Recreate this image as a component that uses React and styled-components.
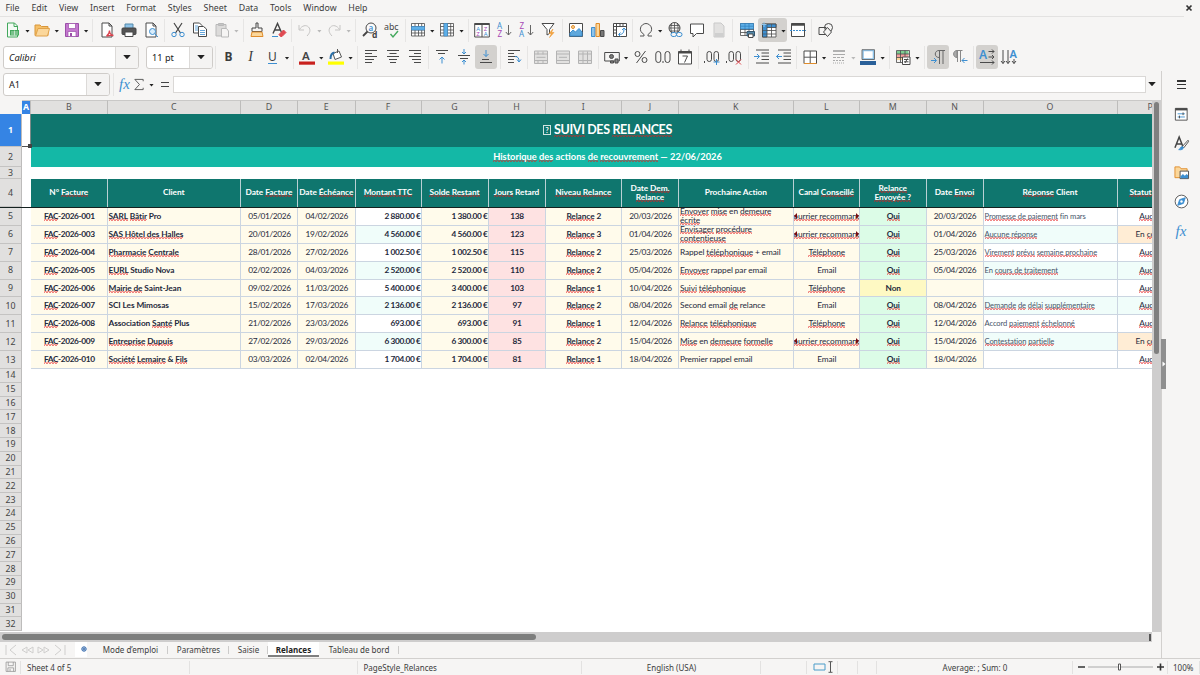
import React from 'react'
import styled, { createGlobalStyle, css } from 'styled-components'

const blue = '#3d8fd1'
const dark = '#4a4a4a'

// ---------- icons, all on a 16x16 grid ----------

const page = <path d="M3 1h7l3 3v11H3z M10 1v3h3" fill="#fff" />
const arrowDown = <path d="M12.5 3v10M9.8 10l2.7 3 2.7-3" stroke="#666" />
const gridLines = <path d="M1.5 1.5h13v12.5h-13z M1.5 4.5h13M1.5 8h13M1.5 11h13M5 1.5v12.5M8.5 1.5v12.5M11.7 1.5v12.500" strokeWidth=".8" />
const mergeIcon = (extra) => (
  <g stroke="#b3b3b3">
    <path d="M1.5 2h13v12.5h-13z" fill="#e2e1e0" />
    <path d={extra} />
  </g>
)

const icons = {
  new: <><path d="M2.5 1h7l3 3v11h-10z" fill="#f4fbf5" stroke="#43a85c" /><path d="M9 1v3.500h3.500" stroke="#43a85c" /><path d="M5 8h9v5.500H5z" fill="#43a85c" stroke="none" /><path d="M6 10h7M6 12h7M9.500 8.500v5" stroke="#dff2e3" strokeWidth=".7" /></>,
  open: <><path d="M1 13.500V3h5l1.500 1.500H14V13.500z" fill="#f5c069" stroke="#d9963a" /><path d="M1.500 14L4 6.500h11.500L13.500 14z" fill="#fbd79b" stroke="#e0a24a" /></>,
  save: <><path d="M1.500 1.500h13v13h-13z" fill="#c478cf" stroke="#9b4fa8" /><path d="M4.500 1.500h7v5h-7z M4 9.500h8v5H4z" fill="#fff" stroke="#9b4fa8" strokeWidth=".7" /><path d="M6 11h2v3H6z" fill="#9b4fa8" stroke="none" /></>,
  pdf: <>{page}<path d="M7.500 14c3-2 3-3.500 3-5.500 0 3 1.500 4.500 4 5-2.500-.5-5 0-7 .5z" stroke="#d9434e" strokeWidth="1.300" /></>,
  print: <><path d="M4 6V2h8v4" fill="#8fc4ea" stroke="#5589aa" /><rect x="1" y="6" width="14" height="6.500" rx="1" fill="#555" stroke="#444" /><path d="M4 10h8v4.500H4z" fill="#fff" /></>,
  preview: <>{page}<circle cx="9.500" cy="9.500" r="3" fill="#d9edfb" stroke={blue} /><path d="M12 12l3 3" stroke={blue} /></>,
  cut: <><path d="M4 1l6.500 10M12 1L5.500 11" stroke="#444" strokeWidth="1.200" /><circle cx="4" cy="12.500" r="2.200" stroke={blue} /><circle cx="12" cy="12.500" r="2.200" stroke={blue} /></>,
  copy: <><path d="M1.500 1h6l2.500 2.500V11H1.500z" fill="#fff" /><path d="M6.500 4.500h5l3 2.500v7.500h-8z" fill="#fff" /><path d="M8 8.500h5M8 10.500h5M8 12.500h5M3 4h3M3 6h3M3 8h3" stroke={blue} strokeWidth=".8" /></>,
  paste: <g stroke="#b9b9b9"><path d="M2 2.500h10V14H2z" fill="#dcdbda" /><path d="M4.500 1.500h5v2h-5z" fill="#c4c4c4" /><path d="M7.500 6.500h5L14.500 9v6h-7z" fill="#f6f5f4" /></g>,
  brush: <><path d="M7 1h2v5h4v3.500H3V6h4z" fill="#f6f5f4" stroke="#444" /><path d="M3 10h10l1 4.500H2z" fill="#fbd79b" stroke="#e08d2c" /></>,
  clear: <><path d="M2 11.500L6.500 1.500 11 11.500M4 8h5" stroke="#444" strokeWidth="1.400" /><path d="M1 14.500h6" stroke={blue} /><path d="M8 12.500l4.500-4.500 2.500 2.500-4 4H9.500z" fill="#e04a52" stroke="#e04a52" /></>,
  undo: <path d="M2 3v5h5M2.500 7.500C5 3.500 9 2.500 11.500 5s1.500 6-1.500 9" stroke="#c6c5c4" />,
  redo: <path d="M14 3v5H9M13.500 7.500C11 3.500 7 2.500 4.500 5S3 11 6 14" stroke="#c6c5c4" />,
  find: <><circle cx="9" cy="6" r="5" fill="#fbfbfb" /><path d="M5.500 9.500L1 14" stroke="#444" strokeWidth="1.800" /><text x="6.500" y="8.500" fontSize="8" fontWeight="600" fill={blue} stroke="none">a</text><text x="10" y="15.500" fontSize="8.500" fontWeight="700" fill="#444" stroke="none">d</text></>,
  spell: <><text x="0" y="7.500" fontSize="8.800" fill="#444" stroke="none">abc</text><path d="M6.500 12l2.500 3 5-6" stroke="#43a85c" strokeWidth="1.400" /></>,
  row: <><path d="M1.500 1.500h13v12.500h-13z" fill="#fff" stroke="none" />{gridLines}<path d="M1.500 4.500h13v3.500h-13z" fill="#5fb0e8" stroke="#3d8fd1" strokeWidth=".6" /></>,
  column: <><path d="M1.500 1.500h13v12.500h-13z" fill="#fff" stroke="none" />{gridLines}<path d="M5 1.500h3.500v12.500H5z" fill="#5fb0e8" stroke="#3d8fd1" strokeWidth=".6" /></>,
  sort: <><path d="M.7 1.500h14.600v13.500H.7z M8 1.500v13.500" fill="#fff" /><path d="M.7 2h14.600" strokeWidth="2" /><text x="2.200" y="8.500" fontSize="6" fill={blue} stroke="none">A</text><text x="2.200" y="14.300" fontSize="6" fill="#a649b5" stroke="none">Z</text><text x="9.700" y="8.500" fontSize="6" fill="#a649b5" stroke="none">Z</text><text x="9.700" y="14.300" fontSize="6" fill={blue} stroke="none">A</text></>,
  az: <><text x="1" y="7" fontSize="8" fill={blue} stroke="none">A</text><text x="1.500" y="15" fontSize="8" fill="#a649b5" stroke="none">Z</text>{arrowDown}</>,
  za: <><text x="1.500" y="7" fontSize="8" fill="#a649b5" stroke="none">Z</text><text x="1" y="15" fontSize="8" fill={blue} stroke="none">A</text>{arrowDown}</>,
  filter: <><path d="M2 1.500h12L9.500 7.500v4L7 13V7.500z" fill="#fff" /><path d="M13 7l-4 4.500h2.500L9.500 15.500l4.500-5h-2.500z" fill="#f4a742" stroke="#ea8f22" strokeWidth=".5" /></>,
  image: <><path d="M1.500 1.500h13v13h-13z" fill="#fff" /><circle cx="5" cy="5" r="1.500" fill="#fbd79b" stroke="#e08d2c" /><path d="M2 14v-3l3-3 2.500 2L11 6.500 14 10v4z" fill="#5fa8dc" stroke={blue} /></>,
  chart: <><path d="M1.500 5.500h3.500v9H1.500z" fill="#8fc4ea" stroke={blue} /><path d="M6 1.500h3.500v13H6z" fill="#fbd79b" stroke="#e08d2c" /><path d="M10.500 8.500h3.500v6h-3.500z" fill="#777" /></>,
  pivot: <><path d="M1.500 1.500h13v13h-13z M1.500 4.500h13 M4.500 1.500v13 M8 1.500v3M11 1.500v3M1.500 8h3M1.500 11h3" fill="#fff" /><path d="M7 12.500c4 0 5-2 5-6M10 8l2-2 2 2M8.500 10.500l-2 2 2 2" stroke={blue} /></>,
  omega: <path d="M2 14h4v-1.500C3 10.500 2 8.500 2.500 6 3 3.500 5.500 1.500 8 1.500S13 3.500 13.500 6c.5 2.500-.5 4.500-3.500 6.500V14h4" stroke="#555" />,
  link: <><circle cx="7.500" cy="6" r="5.500" /><path d="M2 6h11M3 3.500h9M3 9h9M7.500.5v11M5 1.500c-1.500 3-1.500 6 0 9M10 1.500c1.500 3 1.500 6 0 9" strokeWidth=".8" /><rect x="4" y="10.500" width="5.500" height="4" rx="2" fill="#f6f5f4" stroke={blue} /><rect x="9.500" y="10.500" width="5.500" height="4" rx="2" fill="#f6f5f4" stroke={blue} /></>,
  comment: <path d="M1.500 2h13v9.500H7.500L4 15v-3.500H1.500z" fill="#fff" />,
  header: <><path d="M3 1h7l3 3v11H3z" fill="#e2e1e0" stroke="#c9c9c9" /><path d="M4 11h8.500v4H4z" fill="#cfcfcf" stroke="none" /></>,
  printarea: <><path d="M1.500 1.500h13v12h-13z M1.500 7.500h13M1.500 10.500h13M6 1.500v12M10 1.500v12" fill="#fff" strokeWidth=".8" /><path d="M1.500 1.500h13v5.500h-13z M1.500 4.200h13M6 1.500v5.500M10 1.500v5.500" fill="#5fb0e8" stroke="#2f7fbf" strokeWidth=".7" /><path d="M8 9.500h7.500v4.500H8z" fill="#5589aa" stroke="#33556e" /><path d="M9.500 12h4.500v3.500H9.500z" fill="#fff" /></>,
  freeze: <><path d="M1.500 2h13.500v13h-13.500zM1.500 8.500h13.500M1.500 12h13.500M10.500 2v13" fill="#fff" strokeWidth=".8" /><path d="M1.500 2h13.500v3.500H6V15H1.500z" fill="#3d8fd1" stroke="#444" strokeWidth=".8" /><path d="M1.500 8.500H6M1.500 12H6M10.500 2v3.500M6 2v3.500" strokeWidth=".6" /><path d="M3 0v5M.5 2.500h5" stroke="#8fc4ea" /></>,
  split: <><path d="M1.500 1.500h13v13h-13z" fill="#fff" /><path d="M1.500 2.500h13" strokeWidth="2.500" /><path d="M0 8.500h16" stroke={blue} strokeDasharray="2 1" /></>,
  shapes: <><path d="M1 5.500h7v7H1z" /><circle cx="10.500" cy="5.500" r="4" /><path d="M9.500 5.500l4 4.500-4 4.500-4-4.500z" fill="#f6f5f4" /></>,
  fontcolor: <><text x="3" y="10.500" fontSize="11.500" fontWeight="600" fill="#444" stroke="none">A</text><path d="M0 12.500h16v3.200H0z" fill="#c9211e" stroke="none" /></>,
  fill: <><path d="M5 4.500L11 2l2.500 6-6.500 2.500z" fill="#fff" stroke="#555" /><path d="M2.500 10c0-4 1-6 4-6.500" stroke="#2a6fa8" strokeWidth="2" /><path d="M9.500 0v4" stroke="#555" /><path d="M0 12.500h16v3.200H0z" fill="#ffff00" stroke="none" /></>,
  left: <path d="M2 1.500h12M2 4.500h7M2 7.500h12M2 10.500h9M2 13.500h7" />,
  center: <path d="M2 1.500h12M4.500 4.500h7M2 7.500h12M4 10.500h8M5 13.500h6" />,
  right: <path d="M2 1.500h12M7 4.500h7M2 7.500h12M5 10.500h9M7 13.500h7" />,
  top: <><path d="M2 1.500h12M4 4.500h7" /><path d="M8 14.500V8M5.500 10.500L8 8l2.500 2.500" stroke={blue} /></>,
  middle: <><path d="M2 6.500h12M4 9.500h8" /><path d="M8 0v5M6 3l2 2 2-2M8 15.500V11M6 13l2-2 2 2" stroke={blue} /></>,
  bottom: <><path d="M4 10.500h7M2 13.500h12" /><path d="M8 1v6.500M5.500 5L8 7.500 10.500 5" stroke={blue} /></>,
  wrap: <><path d="M2 1.500h12M2 4.500h6M2 7.500h9M2 10.500h6M2 13.500h6" /><path d="M9 7.500c3 0 4 1.500 4 5M11 10.500l2 2.500 2-2.500" stroke={blue} /></>,
  merge1: mergeIcon('M1.500 5h13M1.500 11.500h13M5 2.500v3M10 2.500v3M5 11.500v3M10 11.500v3M3.500 8.300h9'),
  merge2: mergeIcon('M1.500 5h13M1.500 11.500h13M4 8.300h8'),
  merge3: mergeIcon('M1.500 5h13M1.500 11.500h13M6 2.500v12M10.500 2.500v12'),
  currency: <><path d="M.7 3.500h14.600v8.500H.7z" /><circle cx="7.500" cy="7.500" r="2" fill="#777" /><path d="M6.500 12h3v2h-3zM11 10h3v4h-3z" fill="#888" /></>,
  percent: <><circle cx="4.500" cy="5" r="2.500" /><circle cx="11.500" cy="11" r="2.500" /><path d="M12.500 2L3.500 14" /></>,
  number: <><rect x=".8" y="2.500" width="5" height="11" rx="2.500" /><path d="M8 12v2" /><rect x="10" y="2.500" width="5" height="11" rx="2.500" /></>,
  date: <><path d="M1.500 2.500h13v12.500h-13z" fill="#fff" /><path d="M1.500 3.500h13" strokeWidth="2" /><path d="M4 .5v3M12 .5v3" /><path d="M5.500 7h5L7.500 13.500" /></>,
  adddec: <><path d="M.5 12v2" /><rect x="3" y="2.500" width="4.500" height="10" rx="2.200" /><rect x="10" y="2.500" width="4.500" height="10" rx="2.200" /><path d="M12.500 10v6M9.500 13h6" stroke={blue} /></>,
  deldec: <><path d="M.5 12v2" /><rect x="3" y="2.500" width="4.500" height="10" rx="2.200" /><rect x="10" y="2.500" width="4.500" height="10" rx="2.200" /><path d="M10 10.500l5 5M15 10.500l-5 5" stroke="#e0434b" /></>,
  indent: <><path d="M2 1h13M7.500 4h7.500M7.500 7.200h7.500M7.500 10.500h7.500M2 14h13" /><path d="M0 7.500h5M3 5l2.500 2.500L3 10" stroke={blue} /></>,
  outdent: <><path d="M2 1h13M7.500 4h7.500M7.500 7.200h7.500M7.500 10.500h7.500M2 14h13" /><path d="M6 7.500H.5M3 5L.5 7.500 3 10" stroke={blue} /></>,
  borders: <><path d="M2 2h12.500v12.500H2z" fill="#fff" /><path d="M8.200 2v12.500M2 8.200h12.500" stroke="#555" /><path d="M2 14.500h12.500" stroke="#e08d2c" /></>,
  bstyle: <g stroke="#aaa"><path d="M2 2h12" strokeWidth="1.800" /><path d="M2 5.500h12" /><path d="M2 8.500h12" strokeDasharray="3 1" /><path d="M2 11.500h12" strokeDasharray="2 1" /><path d="M2 14h12" strokeDasharray="1 1" /></g>,
  bcolor: <><path d="M3 1.500h10.500v8.500H3z" fill="#fff" stroke="#8fc4ea" strokeWidth="1.600" /><path d="M2 .7h12.500v9.800H2z" stroke="#555" strokeWidth=".8" /><path d="M0 12h16v4H0z" fill="#2a6099" stroke="none" /></>,
  cond: <><path d="M1.500 2h12v3h-12z" fill="#7fce93" stroke="none" /><path d="M1.500 5h12v3h-12z" fill="#f3a0a0" stroke="none" /><path d="M1.500 8h12v3h-12z" fill="#fbd79b" stroke="none" /><path d="M1.500 1.500h13v12h-13zM1.500 5h13M1.500 8.500h13M5.500 1.500v12M10 1.500v6" strokeWidth=".8" /><path d="M7.500 8h7.500v7.500H7.500z" fill="#fff" /><path d="M9 10.500h4.500M9 12.800h4.500M12.500 9.500l-2.500 4.500" /></>,
  ltr: <><path d="M9.500 15V2M13 15V2M15 1.500H9C4 1.500 4 8.500 9 8.500" stroke="#666" /><path d="M1 11.500h5M4 9L6.500 11.500 4 14" stroke={blue} /></>,
  rtl: <><path d="M5 1.500C.5 1.500.5 8.500 5 8.500z" fill="#aaa" stroke="#888" /><path d="M5.500 13V1.500M8.500 13V1.500M10.500 1.500H5" stroke="#888" /><path d="M15.500 11.500H10M12.500 9L10 11.500l2.500 2.500" stroke={blue} /></>,
  horiz: <><text x="0" y="10" fontSize="12" fontWeight="600" fill={blue} stroke="none">A</text><path d="M9.500 2.500h5.500M9.500 8h5.500M1 13.500h14M13 .5l2 2-2 2M13 6l2 2-2 2M13 11.500l2 2-2 2" /></>,
  vert: <><text x="8.500" y="9" fontSize="11" fontWeight="600" fill={blue} stroke="none">A</text><path d="M2 1v13.500M7 1v13.500M13 10v4.500M0 12l2 2.500 2-2.500M5 12l2 2.500 2-2.500M11 12l2 2.500 2-2.500" /></>,
  props: <><path d="M1.500 1.500h13v13h-13z" fill="#fff" /><path d="M1.500 2.500h13" strokeWidth="2.500" /><path d="M4 7.500h8M4 11h8" stroke={blue} /><path d="M10 6v3M6 9.500v3" stroke="#444" /></>,
  styles: <><path d="M1 12.500L5.500 1 10 12.500M2.500 8.500h6" stroke="#444" strokeWidth="1.600" /><path d="M15 4.500L9 11l1.500 1.500L15.500 6z" fill="#fff" /><path d="M5 14.500c2.500.5 5 0 5-2.500-2-1.500-3 0-3.500 1.500z" fill={blue} stroke={blue} /></>,
  gallery: <><path d="M1 13.500V2h5l1.500 2H14v9.500z" fill="#fbd79b" stroke="#e08d2c" /><path d="M6.500 6.500h9v8h-9z" fill="#fff" /><path d="M7 14v-2l2.500-2.500 2 2 2-2 1.500 1.500v3z" fill={blue} stroke="none" /></>,
  navigator: <><circle cx="8" cy="8" r="6.800" fill="#fff" stroke="#555" /><path d="M12 4l-2 6-6 2 2-6z" fill={blue} stroke={blue} /><circle cx="8" cy="8" r="1.300" fill="#fff" stroke="none" /></>,
  floppy: <g stroke="#8d8d8d"><path d="M1.500 1.500h13v13h-13z M4.500 1.500v5h7v-5 M4 14.500v-5h8v5M7 11v3" /></g>,
}

const Svg = styled.svg`
  display: block;
  flex: none;
  width: ${(p) => p.$size || 16}px;
  height: ${(p) => p.$size || 16}px;
  fill: none;
  stroke: ${dark};
  stroke-width: 1;
  font-family: 'Noto Sans', sans-serif;
  overflow: visible;
`

const Icon = ({ name, size }) => (
  <Svg viewBox="0 0 16 16" $size={size}>{icons[name]}</Svg>
)

// ---------- toolbars ----------

// numbers are separators (their width), strings are buttons: "v" dropdown, "!" pressed, "-" greyed arrow
const standardBar = [
  'new v', 'open v', 'save v', 6, 'pdf', 'print', 'preview', 5, 'cut', 'copy', 'paste v-', 5.7,
  'brush', 'clear', 4, 'undo v-', 'redo v-', 6.8, 'find', 'spell', 3.5, 'row v', 'column v', 6,
  'sort', 'az', 'za', 'filter', 5.3, 'image', 'chart', 'pivot', 4, 'omega v', 'link', 'comment',
  'header', 6, 'printarea', 'freeze v!', 'split', 5.4, 'shapes',
]

const formatBar = [
  4.5, 'B', 'I', 'U v', 5, 'fontcolor v', 'fill v', 6, 'left', 'center', 'right', 5, 'top', 'middle', 'bottom !',
  5.7, 'wrap', 5, 'merge1', 'merge2', 'merge3', 4.5, 'currency v', 'percent', 'number', 'date', 5.5,
  'adddec', 'deldec', 5.7, 'indent', 'outdent', 3.5, 'borders v', 'bstyle v-', 'bcolor v', 5.5, 'cond v', 5.7,
  'ltr !', 'rtl', 5.5, 'horiz !', 'vert',
]

const Tools = ({ items }) => items.map((item, i) => {
  if (typeof item === 'number') return <Separator key={i} $w={item} />
  const [name, flags = ''] = item.split(' ')
  return (
    <Tool key={i} $active={flags.includes('!')}>
      <ToolFace>{'BIU'.includes(name) ? <Letter $kind={name}>{name}</Letter> : <Icon name={name} />}</ToolFace>
      {flags.includes('v') && <Caret $muted={flags.includes('-')} />}
    </Tool>
  )
})

// ---------- sheet data, ~words~ are flagged by the spell checker ----------

const columns = 'ABCDEFGHIJKLMNOP'.split('')

const headers = [
  'N° ~Facture~', 'Client', 'Date ~Facture~', 'Date ~Échéance~', '~Montant TTC~', '~Solde Restant~', '~Jours~ Retard',
  '~Niveau Relance~', 'Date ~Dem.~ ~Relance~', 'Prochaine Action', 'Canal ~Conseillé~', '~Relance~ ~Envoyée\u00a0?~',
  'Date ~Envoi~', '~Réponse~ Client', '~Statut~ Final',
]

const courrier = '~Courrier recommandé~'
const tel = '~Téléphone~'

const rows = [
  ['001', '~SARL~ ~Bâtir~ Pro', '05/01/2026', '04/02/2026', '2 880.00 €', '1 380.00 €', '138', '2', '20/03/2026', '~Envoyer~ ~mise~ en ~demeure~ ~écrite~', courrier, '~Oui~', '20/03/2026', '~Promesse de paiement~ fin mars', '~Aucun~'],
  ['003', '~SAS Hôtel des Halles~', '20/01/2026', '19/02/2026', '4 560.00 €', '4 560.00 €', '123', '3', '01/04/2026', '~Envisager~ ~procédure~ ~contentieuse~', courrier, '~Oui~', '01/04/2026', '~Aucune réponse~', 'En ~cours~'],
  ['004', '~Pharmacie~ ~Centrale~', '28/01/2026', '27/02/2026', '1 002.50 €', '1 002.50 €', '115', '2', '25/03/2026', 'Rappel ~téléphonique~ + email', tel, '~Oui~', '25/03/2026', '~Virement~ ~prévu~ ~semaine prochaine~', '~Aucun~'],
  ['005', '~EURL~ Studio Nova', '02/02/2026', '04/03/2026', '2 520.00 €', '2 520.00 €', '110', '2', '05/04/2026', '~Envoyer~ rappel par email', 'Email', '~Oui~', '05/04/2026', 'En ~cours de traitement~', '~Aucun~'],
  ['006', '~Mairie de~ Saint-Jean', '09/02/2026', '11/03/2026', '5 400.00 €', '3 400.00 €', '103', '1', '10/04/2026', '~Suivi~ ~téléphonique~', tel, 'Non', '', '', '~Aucun~'],
  ['007', 'SCI Les Mimosas', '15/02/2026', '17/03/2026', '2 136.00 €', '2 136.00 €', '97', '2', '08/04/2026', 'Second email ~de~ relance', 'Email', '~Oui~', '08/04/2026', '~Demande~ ~de~ ~délai~ ~supplémentaire~', '~Aucun~'],
  ['008', 'Association ~Santé~ Plus', '21/02/2026', '23/03/2026', '693.00 €', '693.00 €', '91', '1', '12/04/2026', '~Relance~ ~téléphonique~', tel, '~Oui~', '12/04/2026', 'Accord ~paiement~ ~échelonné~', '~Aucun~'],
  ['009', '~Entreprise~ ~Dupuis~', '27/02/2026', '29/03/2026', '6 300.00 €', '6 300.00 €', '85', '2', '15/04/2026', '~Mise~ en ~demeure~ ~formelle~', courrier, '~Oui~', '15/04/2026', '~Contestation~ ~partielle~', 'En ~cours~'],
  ['010', '~Société~ ~Lemaire~ & ~Fils~', '03/03/2026', '02/04/2026', '1 704.00 €', '1 704.00 €', '81', '1', '18/04/2026', 'Premier rappel email', 'Email', '~Oui~', '18/04/2026', '', '~Aucun~'],
]

const cream = '#fffbeb'
const boldCols = [0, 1, 4, 5, 6, 7, 11]
const numberCols = [0, 2, 3, 4, 5, 6, 8, 12]
const aligns = { 1: 'flex-start', 4: 'flex-end', 5: 'flex-end', 9: 'flex-start', 13: 'flex-start' }

const background = (col, row, text) => {
  const stripe = row % 2 ? '#f0fdfa' : '#fff'
  if (col === 6) return '#fee2e2'
  if (col === 11) return text === 'Non' ? '#fef9c3' : '#dcfce7'
  if (col === 14) return text.startsWith('En') ? '#ffedd5' : stripe
  if (col === 4 || col === 13) return stripe
  return cream
}

const Words = ({ text }) => text.split('~').map((part, i) => (
  i % 2 ? <Typo key={i}>{part}</Typo> : part
))

const Sheet = () => (
  <Grid>
    <Row $h={14}>
      <Corner />
      {columns.map((c) => <ColHead key={c} $active={c === 'A'}>{c}</ColHead>)}
    </Row>
    <Row $h={33}>
      <RowHead $active>1</RowHead>
      <Cursor><i /></Cursor>
      <Banner $bg="#0f766e" $big><Tofu>?</Tofu><span><Words text="~SUIVI~ DES ~RELANCES~" /></span></Banner>
    </Row>
    <Row $h={20}>
      <RowHead>2</RowHead>
      <Blank />
      <Banner $bg="#14b8a6"><span><Words text="~Historique~ ~des~ actions ~de~ ~recouvrement~ — 22/06/2026" /></span></Banner>
    </Row>
    <Row $h={12}><RowHead>3</RowHead></Row>
    <Row $h={29} $frozen>
      <RowHead>4</RowHead>
      <Blank />
      {headers.map((h) => <HeadCell key={h}><span><Words text={h} /></span></HeadCell>)}
    </Row>
    {rows.map((row, r) => (
      <Row key={row[0]} $h={17.9}>
        <RowHead>{r + 5}</RowHead>
        <Blank />
        {row.map((value, c) => {
          const text = c === 0 ? `~FAC~-2026-${value}` : c === 7 ? `~Relance~ ${value}` : value
          return (
            <Cell
              key={c}
              $bg={background(c, r, text)}
              $bold={boldCols.includes(c)}
              $number={numberCols.includes(c)}
              $align={aligns[c]}
              $wrap={c === 9 && r < 2}
              $note={c === 13}
            >
              <span><Words text={text} /></span>
              {text === courrier && <Overflow />}
            </Cell>
          )
        })}
      </Row>
    ))}
    {Array.from({ length: 19 }, (_, i) => (
      <Row key={i} $h={13.8}><RowHead>{i + 14}</RowHead></Row>
    ))}
  </Grid>
)

const App = () => (
  <Window>
    <Global />
    <MenuBar>
      {['File', 'Edit', 'View', 'Insert', 'Format', 'Styles', 'Sheet', 'Data', 'Tools', 'Window', 'Help'].map((m) => <span key={m}>{m}</span>)}
      <Close viewBox="0 0 8 8"><path d="M1.500 1.500l5 5M6.500 1.500l-5 5" /></Close>
    </MenuBar>
    <Toolbar><Tools items={standardBar} /></Toolbar>
    <Toolbar>
      <Combo $w={136} $italic><span>Calibri</span><b><Caret $large /></b></Combo>
      <Gap $w={7} />
      <Combo $w={67}><span>11 pt</span><b><Caret $large /></b></Combo>
      <Tools items={formatBar} />
    </Toolbar>
    <Body>
      <Main>
        <FormulaBar>
          <Combo $w={107}><span>A1</span><b><Caret $large /></b></Combo>
          <Separator $w={6} />
          <Fx>fx</Fx>
          <Sigma viewBox="0 0 12 14"><path d="M10.500 3.500V1.500H1.500L6.500 7l-5 5.500h9V10.500" /></Sigma>
          <Caret />
          <Equals />
          <Input />
          <Caret $large />
        </FormulaBar>
        <SheetArea>
          <Viewport><Sheet /></Viewport>
          <VScroll><i /></VScroll>
        </SheetArea>
        <HScroll><i /><b /></HScroll>
        <Tabs>
          <TabNav viewBox="0 0 62 12">
            <path d="M1 1v10M11 1L5 6l6 5M22 3l-5 3 5 3zM28 3l-5 3 5 3zM33 3l5 3-5 3zM39 3l5 3-5 3zM50 1l6 5-6 5M60 1v10" />
          </TabNav>
          <AddTab><svg viewBox="0 0 6 6"><circle cx="3" cy="3" r="2.200" /><path d="M3 1.500v3M1.500 3h3" /></svg></AddTab>
          <Tab $w={75}>Mode d’emploi</Tab>
          <Tab $w={61}>Paramètres</Tab>
          <Tab $w={39}>Saisie</Tab>
          <Tab $w={51} $active>Relances</Tab>
          <Tab $w={80}>Tableau de bord</Tab>
        </Tabs>
      </Main>
      <Sidebar>
        <Handle viewBox="0 0 5 50"><path d="M0 0h5v50H0z" fill="#8f8f8f" /><path d="M1.500 22.500v5l3-2.500z" fill="#fff" /></Handle>
        <Burger><i /><i /><i /></Burger>
        <Icon name="props" size={14.5} />
        <Icon name="styles" size={15} />
        <Icon name="gallery" size={15} />
        <Icon name="navigator" size={15} />
        <Fx>fx</Fx>
      </Sidebar>
    </Body>
    <Status>
      <Field $w={21}><Icon name="floppy" size={11.5} /></Field>
      <Field $w={169} $left={6}>Sheet 4 of 5</Field>
      <Field $w={168} />
      <Field $w={224} $left={5.5}>PageStyle_Relances</Field>
      <Field $w={179}>English (USA)</Field>
      <Field $w={46} />
      <Field $w={31}>
        <Selection viewBox="0 0 20 12"><path d="M1 3h11v6H1z" stroke="#4a9cc9" /><path d="M17.500 1v10M15.500.7h4M15.500 11.300h4" stroke="#555" /></Selection>
      </Field>
      <Field $w={20} />
      <Field $w={19} />
      <Field $w={196}>Average: ; Sum: 0</Field>
      <Field $w={95}>
        <Zoom viewBox="0 0 86 10"><path d="M0 5h7M79 5h7M82.500 1.500v7" stroke="#333" strokeWidth="1.600" /><path d="M10 5h65" stroke="#aaa" /><path d="M40.500 2h2v6h-2z" fill="#fff" stroke="#555" /></Zoom>
      </Field>
      <Field $w={32} $left={5}>100%</Field>
    </Status>
  </Window>
)

const Global = createGlobalStyle`
  * {
    box-sizing: border-box;
  }
  body {
    margin: 0;
    overflow: hidden;
  }
`

const Window = styled.div`
  width: 1200px;
  height: 675px;
  display: flex;
  flex-direction: column;
  background: #f6f5f4;
  color: #3c3c3c;
  font: 8.8px 'Noto Sans', sans-serif;
  overflow: hidden;
`

const MenuBar = styled.div`
  height: 17px;
  flex: none;
  display: flex;
  align-items: center;
  gap: 11.8px;
  margin-right: 16px;
  padding-left: 5.5px;
  border-bottom: 1px solid #e3e2e1;
`

const Close = styled.svg`
  width: 8px;
  height: 8px;
  margin-left: auto;
  margin-right: -9px;
  overflow: visible;
  stroke: #333;
  stroke-width: 1.7;
`

const Toolbar = styled.div`
  height: 27px;
  flex: none;
  display: flex;
  align-items: center;
  padding: 0 0 1px 2px;
`

const Tool = styled.div`
  height: 24px;
  flex: none;
  display: flex;
  align-items: center;
  border-radius: 3px;
  background: ${(p) => (p.$active ? '#d3d1ce' : 'transparent')};
`

const ToolFace = styled.div`
  width: 22px;
  display: flex;
  justify-content: center;
`

const Letter = styled.span`
  font-size: 12px;
  line-height: 16px;
  ${(p) => p.$kind === 'B' && 'font-weight: 700;'}
  ${(p) => p.$kind === 'I' && "font-family: 'Liberation Serif', serif; font-style: italic; font-size: 14px;"}
  ${(p) => p.$kind === 'U' && css`
    line-height: 12px;
    border-bottom: 1px solid ${blue};
  `}
`

const Caret = styled.i`
  flex: none;
  width: ${(p) => (p.$large ? 8 : 5)}px;
  height: ${(p) => (p.$large ? 4.5 : 3)}px;
  margin: ${(p) => (p.$large ? 0 : '2px 1.3px 0 1px')};
  background: ${(p) => (p.$muted ? '#b9b9b9' : '#222')};
  clip-path: polygon(0 0, 100% 0, 50% 100%);
`

const Separator = styled.i`
  flex: none;
  width: ${(p) => p.$w}px;
  height: 23px;
  background: linear-gradient(#e6e5e4, #e6e5e4) center / 1px 100% no-repeat;
`

const Gap = styled.i`
  width: ${(p) => p.$w}px;
`

const Combo = styled.div`
  width: ${(p) => p.$w}px;
  height: 23px;
  flex: none;
  display: flex;
  margin-left: ${(p) => (p.$italic ? 1 : 0)}px;
  border: 1px solid #cfccc9;
  border-radius: 3px;
  background: #fff;
  overflow: hidden;
  span {
    flex: 1;
    padding-left: 5px;
    font-size: 9.2px;
    line-height: 21px;
    font-style: ${(p) => (p.$italic ? 'italic' : 'normal')};
    color: #222;
  }
  b {
    width: 23px;
    display: flex;
    align-items: center;
    justify-content: center;
    background: #f4f3f2;
    border-left: 1px solid #dcdad8;
  }
`

const Body = styled.div`
  height: 587px;
  flex: none;
  display: flex;
`

const Main = styled.div`
  width: 1161px;
  display: flex;
  flex-direction: column;
`

const FormulaBar = styled.div`
  height: 29px;
  flex: none;
  display: flex;
  align-items: center;
  padding: 0 5px 3px 3px;
`

const Fx = styled.span`
  flex: none;
  width: 17px;
  text-align: center;
  font: italic 15px/16px 'Liberation Serif', serif;
  color: ${blue};
`

const Sigma = styled.svg`
  width: 12px;
  height: 13px;
  fill: none;
  stroke: #555;
  margin-right: 3px;
`

const Equals = styled.i`
  width: 8px;
  height: 5px;
  margin: 0 4px 0 6px;
  border: solid #444;
  border-width: 1.5px 0;
`

const Input = styled.div`
  flex: 1;
  height: 17px;
  margin-right: 2px;
  background: #fff;
  border: 1px solid #dad8d6;
`

const SheetArea = styled.div`
  height: 532px;
  flex: none;
  display: flex;
  background: #fff;
`

const Viewport = styled.div`
  width: 1152px;
  overflow: hidden;
`

const Grid = styled.div`
  width: 1184px;
  display: flex;
  flex-direction: column;
`

const Row = styled.div`
  height: ${(p) => p.$h}px;
  flex: none;
  display: grid;
  grid-template-columns: 22px 9px 76.5px 133.5px 57px 57.5px 66px 67px 57px 76.5px 57px 114.5px 66.5px 66.5px 57px 134px 66.5px;
  grid-template-rows: 100%;
  ${(p) => p.$frozen && css`
    border-bottom: 1px solid #14211f;
  `}
`

const Corner = styled.div`
  background: #f6f5f4;
`

const ColHead = styled.div`
  display: flex;
  align-items: center;
  justify-content: center;
  line-height: 10px;
  padding-bottom: 1px;
  border-right: 1px solid #bdbcbb;
  border-top: 1px solid #c9c8c7;
  background: ${(p) => (p.$active ? '#3584e4' : '#e1e0df')};
  color: ${(p) => (p.$active ? '#fff' : '#555')};
  font-weight: ${(p) => (p.$active ? 700 : 400)};
`

const RowHead = styled.div`
  display: flex;
  align-items: center;
  justify-content: center;
  line-height: 10px;
  border-right: 1px solid #bdbcbb;
  border-bottom: 1px solid #c4c3c2;
  background: ${(p) => (p.$active ? '#3584e4' : '#e1e0df')};
  color: ${(p) => (p.$active ? '#fff' : '#444')};
  font-weight: ${(p) => (p.$active ? 700 : 400)};
`

const Blank = styled.div``

// outline of the selected cell with its fill handle
const Cursor = styled.div`
  position: relative;
  border-right: 1px solid #7d8a88;
  border-bottom: 1px solid #555;
  i {
    position: absolute;
    right: -2px;
    bottom: -2px;
    width: 4px;
    height: 4px;
    background: #444;
    z-index: 1;
  }
`

const Banner = styled.div`
  grid-column: 3 / -1;
  display: flex;
  align-items: center;
  justify-content: center;
  background: ${(p) => p.$bg};
  color: #fff;
  font: 700 ${(p) => (p.$big ? '12.5px' : '9.3px')} Lato, sans-serif;
  letter-spacing: ${(p) => (p.$big ? '-0.35px' : '0')};
  padding-bottom: ${(p) => (p.$big ? 2 : 1)}px;
`

const Tofu = styled.i`
  width: 8px;
  height: 10px;
  margin-right: 3px;
  border: 1px solid #cfe5e2;
  font: 700 7px/8px Lato, sans-serif;
  text-align: center;
  letter-spacing: 0;
`

// spell checker's zigzag, running along the base line
const Typo = styled.span`
  background: url("data:image/svg+xml,%3Csvg xmlns='http://www.w3.org/2000/svg' width='3' height='2'%3E%3Cpath d='M-.5 2L1.500 .2 3.500 2' fill='none' stroke='%23e3191c' stroke-width='.9'/%3E%3C/svg%3E") 0 100% / 3px 2px repeat-x;
`

const HeadCell = styled.div`
  display: flex;
  align-items: center;
  justify-content: center;
  text-align: center;
  background: #0f766e;
  border-right: 1px solid #b9d0d4;
  padding-bottom: 1px;
  color: #fff;
  font: 700 8.3px/9px Lato, sans-serif;
  letter-spacing: -0.05px;
`

const Cell = styled.div`
  position: relative;
  display: flex;
  align-items: center;
  justify-content: ${(p) => p.$align || 'center'};
  padding: 0 0 0 1px;
  overflow: hidden;
  white-space: ${(p) => (p.$wrap ? 'normal' : 'nowrap')};
  background: ${(p) => p.$bg};
  border-right: 1px solid #cbd5e1;
  border-bottom: 1px solid #cbd5e1;
  color: ${(p) => (p.$note ? '#475569' : '#1e293b')};
  font: ${(p) => (p.$bold ? 700 : 400)} ${(p) => (p.$note ? 7.6 : 8.3)}px/9px Lato, sans-serif;
  letter-spacing: ${(p) => (p.$number ? -0.37 : -0.1)}px;
  span {
    flex: none;
    max-width: ${(p) => (p.$wrap ? '100%' : 'none')};
  }
`

// red arrows of a text that does not fit its cell
const Overflow = styled.i`
  position: absolute;
  inset: 5px 0 auto 0;
  height: 6px;
  &::before,
  &::after {
    content: '';
    position: absolute;
    border: 3px solid transparent;
  }
  &::before {
    left: 0;
    border-left: 0;
    border-right: 3px solid #7a0c10;
  }
  &::after {
    right: 0;
    border-right: 0;
    border-left: 3px solid #7a0c10;
  }
`

const VScroll = styled.div`
  width: 9px;
  background: #cecdcd;
  i {
    display: block;
    width: 5px;
    height: 252px;
    margin: 2px auto 0;
    border-radius: 3px;
    background: #7f7f7f;
  }
`

const HScroll = styled.div`
  height: 10px;
  flex: none;
  width: 1152px;
  display: flex;
  align-items: center;
  justify-content: space-between;
  padding: 0 1px 0 2px;
  background: #cecdcd;
  i {
    width: 534px;
    height: 6px;
    border-radius: 3px;
    background: #7d7e7d;
  }
  b {
    width: 2px;
    height: 7px;
    background: #555;
  }
`

const Tabs = styled.div`
  flex: 1;
  display: flex;
  padding-left: 5px;
  font-size: 8px;
`

const TabNav = styled.svg`
  width: 62px;
  height: 12px;
  margin-top: 2px;
  fill: none;
  stroke: #cfcecd;
`

const AddTab = styled.div`
  width: 19px;
  margin-left: 7px;
  svg {
    display: block;
    width: 12px;
    height: 15px;
    padding: 4px 0 5px 6px;
    margin-left: 1px;
    background: #fff;
    fill: #fff;
    stroke: #2a62a8;
    overflow: visible;
  }
`

const Tab = styled.div`
  width: ${(p) => p.$w}px;
  height: 15px;
  display: flex;
  align-items: center;
  justify-content: center;
  ${(p) => (p.$active ? css`
    font-weight: 700;
    color: #222;
    background: #fff;
    border-bottom: 2px solid #7f7f7f;
    padding-top: 1px;
  ` : css`
    background: linear-gradient(#cccbca, #cccbca) right center / 1px 8px no-repeat;
  `)}
`

const Sidebar = styled.div`
  position: relative;
  width: 39px;
  display: flex;
  flex-direction: column;
  align-items: center;
  gap: 14px;
  padding-top: 9px;
  border-left: 1px solid #d2d0ce;
`

const Handle = styled.svg`
  position: absolute;
  left: -1px;
  top: 268px;
  width: 5px;
  height: 50px;
`

const Burger = styled.div`
  width: 9px;
  height: 9px;
  display: flex;
  flex-direction: column;
  justify-content: space-between;
  margin-bottom: 4px;
  i {
    height: 1.5px;
    background: #333;
  }
`

const Status = styled.div`
  flex: 1;
  display: flex;
  border-top: 1px solid #d2d0ce;
  font-size: 8px;
`

const Field = styled.div`
  width: ${(p) => p.$w}px;
  flex: none;
  display: flex;
  align-items: center;
  justify-content: ${(p) => (p.$left ? 'flex-start' : 'center')};
  padding-left: ${(p) => p.$left || 0}px;
  background: linear-gradient(#e3e2e1, #e3e2e1) right center / 1px 13px no-repeat;
`

const Selection = styled.svg`
  width: 20px;
  height: 12px;
  fill: none;
`

const Zoom = styled.svg`
  width: 86px;
  height: 10px;
`

export default App
